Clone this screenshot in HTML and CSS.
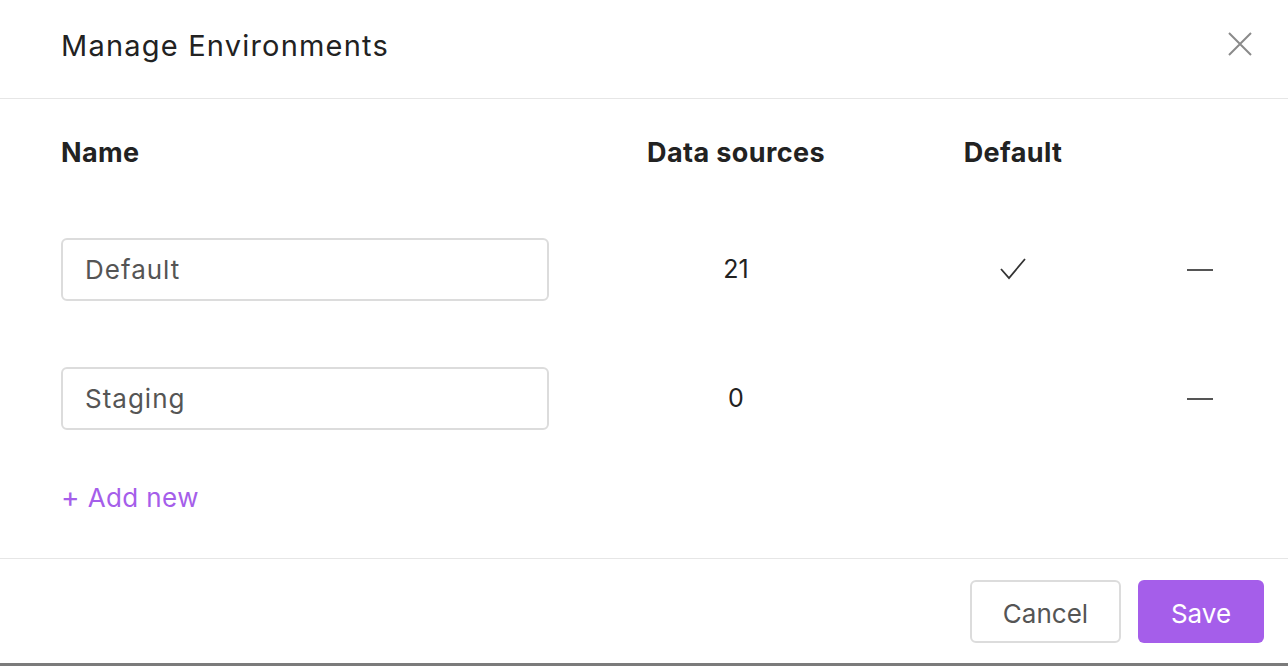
FILE: index.html
```html
<!DOCTYPE html>
<html lang="en">
<head>
<meta charset="utf-8">
<title>Manage Environments</title>
<link rel="stylesheet" href="styles.css">
</head>
<body>
<div class="modal">
  <header class="modal-header">
    <h1 class="modal-title">Manage Environments</h1>
    <button class="close-btn" aria-label="Close">
      <svg width="24" height="24" viewBox="0 0 24 24"><path d="M1 1 L23 23 M23 1 L1 23" stroke="#8a8a8a" stroke-width="2" fill="none"/></svg>
    </button>
  </header>
  <main class="modal-body">
    <div class="env-grid">
      <div class="col-head">Name</div>
      <div class="col-head col-center">Data sources</div>
      <div class="col-head col-center">Default</div>
      <div class="col-head"></div>

      <div class="cell"><input class="name-input" type="text" value="Default"></div>
      <div class="cell col-center num">21</div>
      <div class="cell col-center">
        <svg class="check" width="26" height="22" viewBox="0 0 26 22"><path d="M1 11 L9 20 L25 1" stroke="#333" stroke-width="1.8" fill="none"/></svg>
      </div>
      <div class="cell col-end"><span class="dash"></span></div>

      <div class="cell"><input class="name-input" type="text" value="Staging"></div>
      <div class="cell col-center num">0</div>
      <div class="cell col-center"></div>
      <div class="cell col-end"><span class="dash"></span></div>
    </div>
    <a class="add-new" href="#"><span class="plus">+</span> Add new</a>
  </main>
  <footer class="modal-footer">
    <button class="btn btn-cancel">Cancel</button>
    <button class="btn btn-save">Save</button>
  </footer>
</div>
</body>
</html>
```

FILE: styles.css
```css
* { box-sizing: border-box; }
html, body { margin: 0; padding: 0; background: #fff; }
body { font-family: Inter, "Noto Sans", sans-serif; color: #222; }

.modal {
  height: 666px;
  display: flex;
  flex-direction: column;
  border-bottom: 3px solid #7b7b7b;
}

.modal-header {
  height: 99px;
  flex: none;
  border-bottom: 1px solid #e6e6e6;
  display: flex;
  align-items: center;
  justify-content: space-between;
  padding: 0 36px 0 61px;
}
.modal-title {
  margin: 0 0 8px 0;
  font-size: 29px;
  font-weight: 400;
  color: #222;
  letter-spacing: 1.2px;
}
.close-btn {
  border: 0;
  background: none;
  padding: 0;
  width: 24px;
  height: 24px;
  margin-bottom: 10px;
  cursor: pointer;
}
.close-btn svg { display: block; }

.modal-body {
  flex: 1;
  padding: 39px 0 0 61px;
}
.env-grid {
  display: grid;
  grid-template-columns: 488px 374px 180px 110px;
  grid-template-rows: 34px 63px 63px;
  row-gap: 66px;
}
.col-head {
  font-size: 27px;
  font-weight: 700;
  line-height: 30px;
  letter-spacing: 0.4px;
  color: #222;
}
.col-center { text-align: center; }
.cell {
  display: flex;
  align-items: center;
}
.cell.col-center { justify-content: center; }
.cell.col-end { justify-content: flex-end; }
.num { font-size: 25px; color: #222; margin-top: -2px; }

.name-input {
  width: 488px;
  height: 63px;
  border: 2px solid #dcdcdc;
  border-radius: 6px;
  padding: 0 22px;
  font-family: Inter, "Noto Sans", sans-serif;
  font-size: 26px;
  letter-spacing: 1px;
  color: #555;
  background: #fff;
  outline: none;
}
.check { display: block; margin-top: -2px; }
.dash {
  display: block;
  width: 26px;
  height: 2px;
  background: #555;
}

.add-new {
  display: inline-block;
  margin-top: 52px;
  font-size: 26px;
  line-height: 30px;
  letter-spacing: 0.4px;
  color: #a55eea;
  text-decoration: none;
}
.plus { font-size: 28px; }

.modal-footer {
  height: 105px;
  flex: none;
  border-top: 1px solid #e6e6e6;
  display: flex;
  justify-content: flex-end;
  align-items: flex-start;
  gap: 17px;
  padding: 21px 24px 0 0;
}
.btn {
  height: 63px;
  border-radius: 6px;
  padding: 4px 0 0 0;
  font-family: Inter, "Noto Sans", sans-serif;
  font-size: 26px;
  cursor: pointer;
}
.btn-cancel {
  width: 151px;
  background: #fff;
  border: 2px solid #dcdcdc;
  color: #555;
}
.btn-save {
  width: 126px;
  background: #a55eea;
  border: 0;
  color: #fff;
}
```
